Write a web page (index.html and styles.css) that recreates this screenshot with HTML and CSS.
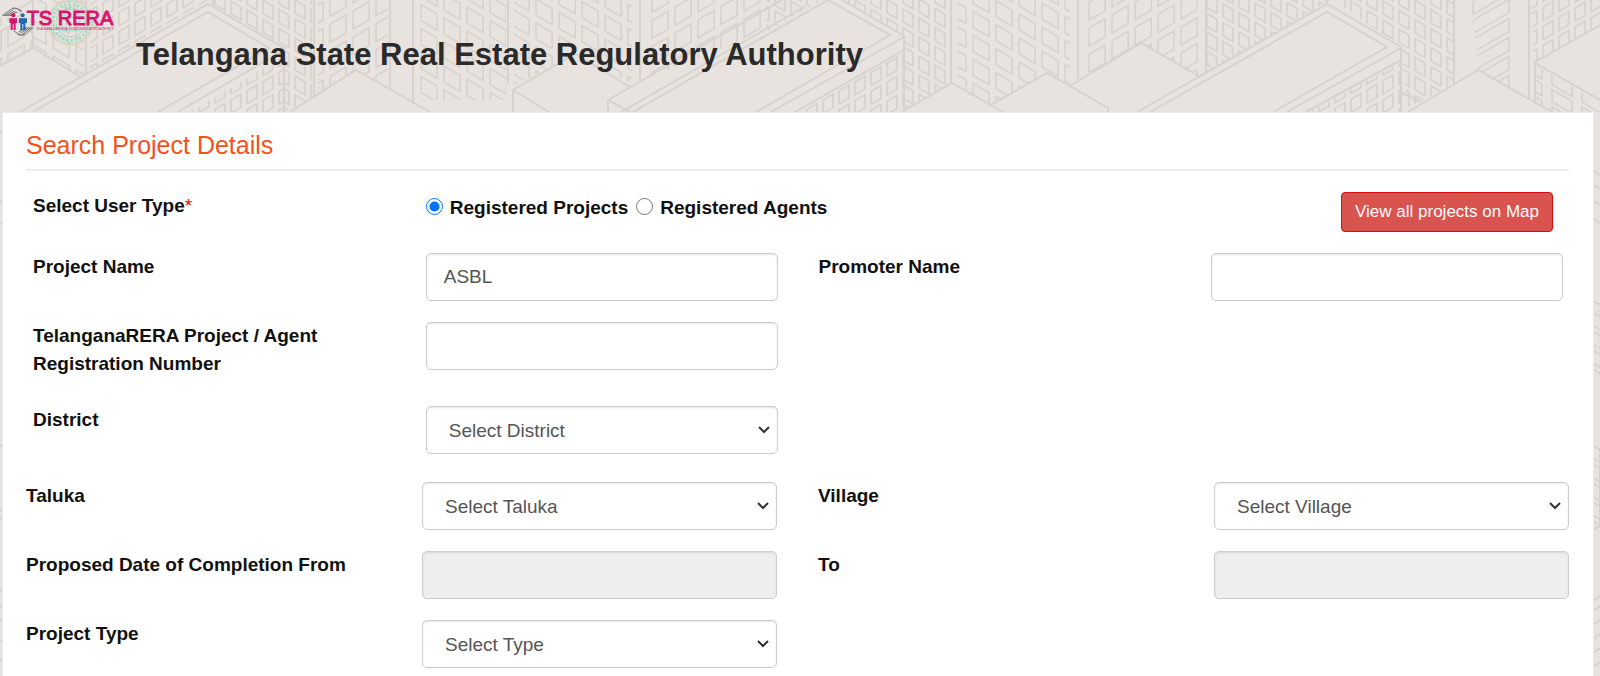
FILE: index.html
```html
<!DOCTYPE html>
<html lang="en">
<head>
<meta charset="utf-8">
<title>Telangana State Real Estate Regulatory Authority</title>
<link rel="stylesheet" href="styles.css">
</head>
<body>
<svg class="skyline" viewBox="0 0 1600 676" preserveAspectRatio="xMidYMin slice" aria-hidden="true">
  <defs>
    <pattern id="big-down" width="23" height="24" patternUnits="userSpaceOnUse" patternTransform="translate(4 0) skewY(30)"><rect x="3" y="4" width="16" height="16"/></pattern>
    <pattern id="big-up" width="23" height="26" patternUnits="userSpaceOnUse" patternTransform="translate(5 0) skewY(-30)"><rect x="3" y="4" width="16" height="18"/></pattern>
    <pattern id="small-down" width="16" height="19" patternUnits="userSpaceOnUse" patternTransform="translate(4 0) skewY(30)"><rect x="3" y="3" width="10" height="13"/></pattern>
    <pattern id="small-up" width="16" height="19" patternUnits="userSpaceOnUse" patternTransform="translate(4 0) skewY(-30)"><rect x="3" y="3" width="10" height="13"/></pattern>
    <pattern id="wide-up" width="48" height="19" patternUnits="userSpaceOnUse" patternTransform="translate(1470 0) skewY(-30)"><rect x="3" y="3" width="36" height="13"/></pattern>
    <pattern id="wide-down" width="30" height="17" patternUnits="userSpaceOnUse" patternTransform="translate(1549 0) skewY(30)"><rect x="3" y="3" width="20" height="12"/></pattern>
  </defs>
  <g class="facade">
    <path fill="url(#big-up)" d="M0 18H34V48L0 66Z"/>
    <path fill="url(#big-down)" d="M34 0H84V78L34 48Z"/>
    <path fill="url(#small-up)" d="M90 0H208L90 70Z"/>
    <path fill="url(#small-down)" d="M213 0H312V100L284 112V48L213 6Z"/>
    <path fill="url(#big-up)" d="M318 0H388V88L356 70L318 93Z"/>
    <path fill="url(#small-up)" d="M284 56V112H190Z"/>
    <path fill="url(#big-down)" d="M418 0H506V100L418 100Z"/>
    <path fill="url(#big-down)" d="M514 0H632V84L575 54L514 86Z"/>
    <path fill="url(#big-up)" d="M647 0H764V32L647 78Z"/>
    <path fill="url(#small-down)" d="M766 0H822L766 32Z"/>
    <path fill="url(#small-down)" d="M842 0H950V84L904 110V36Z"/>
    <path fill="url(#small-up)" d="M904 50V112H795Z"/>
    <path fill="url(#big-down)" d="M958 0H1070V86L1047 73L991 105L958 86Z"/>
    <path fill="url(#big-up)" d="M1087 0H1199V77L1141 43L1087 75Z"/>
    <path fill="url(#small-down)" d="M1206 0H1330L1206 74Z"/>
    <path fill="url(#small-down)" d="M1334 0H1453V84L1408 108L1401 47Z"/>
    <path fill="url(#small-up)" d="M1401 62V112H1310Z"/>
    <path fill="url(#wide-up)" d="M1471 0H1510V88L1478 70Z"/>
    <path fill="url(#small-up)" d="M1531 0H1600V26L1535 62V104Z"/>
    <path fill="url(#wide-down)" d="M1536 66L1600 103V112H1552L1536 104Z"/>
    <path fill="url(#small-down)" d="M1592 310H1600V380H1592Z"/>
    <path fill="url(#small-down)" d="M1592 450H1600V526H1592Z"/>
  </g>
  <path class="edges" d="M0 32L20 20V8L34 0M0 66L33 48L81 77M86 0V74M33 48V0
    M20 112L208 4L284 48V112M33 112L208 12L269 48L158 112M284 50L178 112
    M213 6V0M314 0V96M290 112L356 70L430 112M390 0V90M413 0V104
    M508 0V84M513 112V90L575 54L630 87M513 90L549 112M640 0V81
    M608 112V100L782 0M608 100L630 112M621 112L806 6M828 0L890 35L756 112M842 0L904 36V112M904 37L771 112M633 112L828 0M904 50L795 112
    M951 0V83M903 111L952 83L1003 112M991 105L1047 73L1108 108V112
    M1078 0V80M1070 86L1141 43L1200 77M1206 0V74M1137 112L1327 4L1401 47V112M1150 112L1327 12L1387 47L1273 112M1401 48L1287 112M1401 60L1306 112
    M1327 0V4M1401 92L1420 102M1454 0V84M1408 112L1478 70L1552 112M1529 0V98
    M1600 25L1535 62V104M1535 63L1600 100
    M1592 170L1600 175M1592 184L1600 189M1592 200L1600 205M1592 218L1600 223M1592 300L1600 305M1592 445L1600 450V526L1592 530
    M1592 602L1600 596M1592 612L1600 606M1592 626L1600 620M1592 640L1600 634M1592 654L1600 648M1592 668L1600 662
    M0 132L4 130M0 202L4 200M0 224L4 222M0 446L4 444M0 510L4 512M0 518L4 520M0 590L4 592M0 606L4 608M0 620L4 622M0 640L4 642M0 660L4 662"/>
</svg>

<header class="site-header">
  <svg class="logo" viewBox="0 0 390 144" role="img" aria-label="TS RERA">
    <g class="emblem">
      <circle class="emblem-rim" cx="212" cy="67" r="69"/>
      <circle cx="212" cy="67" r="64"/>
      <circle cx="212" cy="67" r="44"/>
      <circle class="emblem-band" cx="212" cy="67" r="54"/>
      <path d="M186 90V52q0-12 12-12V28h28v12q12 0 12 12v38M180 92h64M198 90V60q14-18 28 0v30M186 52h52M212 28V16"/>
    </g>
    <g class="hands">
      <path d="M8 46L34 27Q44 22 54 27L66 34M14 46L40 30M20 47L46 33M28 46L52 36M8 46H34L46 38M38 24Q50 22 64 34"/>
      <path d="M98 84L76 103Q64 108 52 100L40 92M92 84L68 102M86 84L62 99M80 84L56 96M98 84H72L60 92M52 104Q64 108 76 103"/>
    </g>
    <g class="person-left"><circle cx="40" cy="46" r="6"/><path d="M28 55H51V69H47V90H41V72H38V90H32V69H28Z"/></g>
    <g class="person-right"><circle cx="68" cy="46" r="6"/><path d="M57 55H81V69H76V90H70V72H67V90H61V69H57Z"/></g>
    <text class="logo-name" x="80" y="76">TS RERA</text>
    <text class="logo-tagline" x="108" y="89">TELANGANA STATE REAL ESTATE REGULATORY AUTHORITY</text>
  </svg>
  <h1 class="site-title">Telangana State Real Estate Regulatory Authority</h1>
</header>

<main class="panel">
  <h2 class="panel-title">Search Project Details</h2>
  <form>
    <div class="fields fields-inset">
      <div class="row">
        <span class="label" id="user-type">Select User Type<span class="required">*</span></span>
        <div class="choices" role="radiogroup" aria-labelledby="user-type">
          <label class="choice"><input type="radio" name="type" checked><span>Registered Projects</span></label>
          <label class="choice"><input type="radio" name="type"><span>Registered Agents</span></label>
        </div>
        <button class="map-button" type="button">View all projects on Map</button>
      </div>
      <div class="row">
        <label class="label" for="project">Project Name</label>
        <input class="control" id="project" type="text" value="ASBL">
        <label class="label" for="promoter">Promoter Name</label>
        <input class="control" id="promoter" type="text">
      </div>
      <div class="row">
        <label class="label" for="registration">TelanganaRERA Project / Agent Registration Number</label>
        <input class="control" id="registration" type="text">
      </div>
      <div class="row">
        <label class="label" for="district">District</label>
        <select class="control" id="district"><option>Select District</option></select>
      </div>
    </div>
    <div class="fields">
      <div class="row">
        <label class="label" for="taluka">Taluka</label>
        <select class="control" id="taluka"><option>Select Taluka</option></select>
        <label class="label" for="village">Village</label>
        <select class="control" id="village"><option>Select Village</option></select>
      </div>
      <div class="row">
        <label class="label" for="from">Proposed Date of Completion From</label>
        <input class="control" id="from" type="text" readonly>
        <label class="label" for="to">To</label>
        <input class="control" id="to" type="text" readonly>
      </div>
      <div class="row">
        <label class="label" for="kind">Project Type</label>
        <select class="control" id="kind"><option>Select Type</option></select>
      </div>
    </div>
  </form>
</main>
</body>
</html>
```
FILE: styles.css
```css
* {
  box-sizing: border-box;
}

body {
  position: relative;
  margin: 0;
  min-height: 100vh;
  background: #e8e3df;
  color: #111;
  font-family: "Liberation Sans", Arial, sans-serif;
  font-size: 19px;
  line-height: 28px;
}

.skyline {
  position: absolute;
  inset: 0;
  z-index: -1;
  width: 100%;
  height: 100%;
}

.skyline pattern rect,
.edges {
  fill: none;
  stroke: #d7d2cf;
  stroke-width: 2;
}

.skyline pattern rect {
  stroke: #c9c4c1;
  stroke-width: 1;
}

.site-header {
  display: flex;
  align-items: flex-start;
  gap: 6px;
  min-height: 112px;
}

.logo {
  flex: none;
  width: 130px;
  height: 48px;
}

.emblem {
  fill: none;
  stroke: #a5dabf;
  stroke-width: 3;
}

.emblem .emblem-rim {
  stroke: #e8cfae;
}

.emblem .emblem-band {
  stroke-width: 10;
  stroke-dasharray: 6 7;
}

.hands {
  fill: none;
  stroke: #77787b;
  stroke-width: 3;
}

.person-left {
  fill: #d9136f;
}

.person-right {
  fill: #1b6bb5;
}

.logo-name {
  fill: #d9136f;
  stroke: #d9136f;
  stroke-width: 3;
  font-size: 60px;
}

.logo-tagline {
  fill: #d9136f;
  font-size: 8px;
}

.site-title {
  margin: 37px 0 0;
  color: #2a2a2a;
  font-size: 31px;
  line-height: 36px;
}

.panel {
  min-height: calc(100vh - 112px);
  margin: 0 6px 0 2px;
  padding: 16px 24px 0 23px;
  border: 1px solid #e9e9f2;
  border-bottom: 0;
  background: #fff;
}

.panel-title {
  margin: 0 0 21px;
  padding-bottom: 8px;
  border-bottom: 2px solid #eee;
  color: #f4511e;
  font-size: 25px;
  font-weight: 400;
  line-height: 32px;
}

.fields {
  display: flex;
  flex-direction: column;
  gap: 21px;
}

.fields-inset {
  margin-bottom: 28px;
  padding: 0 6px 0 7px;
}

.row {
  display: grid;
  grid-template-columns: repeat(4, minmax(0, 1fr));
  align-items: start;
  column-gap: 41px;
}

.label {
  margin-bottom: 7px;
  font-weight: 700;
}

.required {
  color: #f00;
  font-weight: 400;
}

.choices {
  display: flex;
  grid-column: span 2;
  gap: 8px;
  padding-top: 2px;
}

.choice {
  display: flex;
  gap: 7px;
  font-weight: 700;
}

.choice input {
  width: 17px;
  height: 17px;
  margin: 4px 0 0;
}

.map-button {
  justify-self: end;
  height: 40px;
  margin-right: 10px;
  padding: 0 13px;
  border: 1px solid #d40f0f;
  border-radius: 4px;
  background: #d9534f;
  color: #fff;
  font-family: inherit;
  font-size: 17px;
}

.control {
  width: 100%;
  height: 48px;
  padding: 0 17px;
  border: 1px solid #ccc;
  border-radius: 5px;
  background-color: #fff;
  box-shadow: inset 0 1px 2px rgba(0, 0, 0, 0.1);
  color: #555;
  font-family: inherit;
  font-size: 19px;
}

select.control {
  appearance: none;
  padding: 0 28px 0 22px;
  background-image: url("data:image/svg+xml,%3Csvg xmlns='http://www.w3.org/2000/svg' width='12' height='8' viewBox='0 0 12 8'%3E%3Cpath d='M1 1l5 5 5-5' fill='none' stroke='%23333' stroke-width='2'/%3E%3C/svg%3E");
  background-position: right 7px center;
  background-repeat: no-repeat;
}

.control:read-only:not(select) {
  background-color: #eee;
}
```
